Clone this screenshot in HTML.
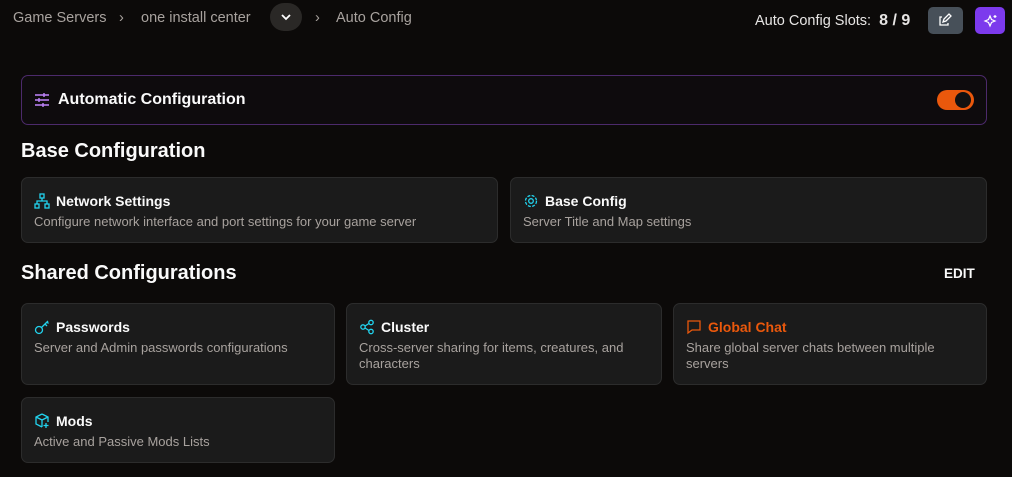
<!DOCTYPE html>
<html><head><style>
*{box-sizing:border-box;margin:0;padding:0}
body{width:1012px;height:477px;background:#0c0a09;font-family:"Liberation Sans",sans-serif;color:#fafafa;position:relative;overflow:hidden}
.a{position:absolute}
.bc{font-size:14.5px;color:#a8a29e;top:10px}
.card{position:absolute;background:#1b1b1b;border:1px solid #2c2c2c;border-radius:7px;padding:14px 12px}
.t{font-size:14px;font-weight:bold;display:flex;align-items:center;gap:6px;height:18px}
.d{font-size:13px;color:#a8a29e;margin-top:4px;line-height:16px}
h2{position:absolute;font-size:20px;font-weight:bold;left:21px}
svg{flex:none}
</style></head><body>
<div class="a bc" style="left:13px">Game Servers</div>
<div class="a bc" style="left:119px">›</div>
<div class="a bc" style="left:141px">one install center</div>
<div class="a" style="left:270px;top:3px;width:32px;height:28px;border-radius:14px;background:#2a2826"><svg width="32" height="28"><path d="M12 12l4 4 4-4" stroke="#fff" stroke-width="1.8" fill="none"/></svg></div>
<div class="a bc" style="left:315px">›</div>
<div class="a bc" style="left:336px">Auto Config</div>
<div class="a" style="left:755px;top:12px;font-size:14.5px;color:#e7e5e4">Auto Config Slots:&nbsp; <b style="font-size:16px">8 / 9</b></div>
<div class="a" style="left:928px;top:7px;width:35px;height:27px;border-radius:5px;background:#475059"><svg width="35" height="27"><path d="M14 10h-2v8h8v-2M15 15l1-3 5-5 2 2-5 5z" stroke="#fff" stroke-width="1.3" fill="none"/></svg></div>
<div class="a" style="left:975px;top:7px;width:30px;height:27px;border-radius:5px;background:#7c3aed"><svg width="30" height="27"><path d="M15 9l1.5 3.5L20 14l-3.5 1.5L15 19l-1.5-3.5L10 14l3.5-1.5z M20 8v3M18.5 9.5h3" stroke="#fff" stroke-width="1.2" fill="none"/></svg></div>

<div class="a" style="left:21px;top:75px;width:966px;height:50px;border:1px solid #4c2a6b;border-radius:7px;background:#0e0b0d"></div>
<div class="a" style="left:34px;top:92px"><svg width="16" height="16" stroke="#c084fc" stroke-width="1.4"><path d="M1 3h14M1 8h14M1 13h14M10 1v4M5 6v4M9 11v4"/></svg></div>
<div class="a" style="left:58px;top:91px;font-size:16px;font-weight:bold">Automatic Configuration</div>
<div class="a" style="left:937px;top:90px;width:37px;height:20px;border-radius:10px;background:#ea580c"><div class="a" style="left:18px;top:2px;width:16px;height:16px;border-radius:8px;background:#111"></div></div>

<h2 style="top:140px">Base Configuration</h2>
<div class="card" style="left:21px;top:177px;width:477px;height:66px"><div class="t"><svg width="16" height="16" fill="none" stroke="#22d3ee" stroke-width="1.3"><rect x="6" y="1" width="4" height="4"/><rect x="1" y="11" width="4" height="4"/><rect x="11" y="11" width="4" height="4"/><path d="M8 5v3M3 11V8h10v3"/></svg>Network Settings</div><div class="d">Configure network interface and port settings for your game server</div></div>
<div class="card" style="left:510px;top:177px;width:477px;height:66px"><div class="t"><svg width="16" height="16" fill="none" stroke="#22d3ee" stroke-width="1.3"><circle cx="8" cy="8" r="2.3"/><circle cx="8" cy="8" r="5.5" stroke-dasharray="3 1.4"/></svg>Base Config</div><div class="d">Server Title and Map settings</div></div>

<h2 style="top:262px">Shared Configurations</h2>
<div class="a" style="left:944px;top:266px;font-size:13.5px;font-weight:bold">EDIT</div>
<div class="card" style="left:21px;top:303px;width:314px;height:82px"><div class="t"><svg width="16" height="16" fill="none" stroke="#22d3ee" stroke-width="1.3"><circle cx="5" cy="11" r="3.5"/><path d="M7.5 8.5L14 2M11 5l2 2M13 3l1.5 1.5"/></svg>Passwords</div><div class="d">Server and Admin passwords configurations</div></div>
<div class="card" style="left:346px;top:303px;width:316px;height:82px;padding-right:30px"><div class="t"><svg width="16" height="16" fill="none" stroke="#22d3ee" stroke-width="1.3"><circle cx="12" cy="3.5" r="2.2"/><circle cx="4" cy="8" r="2.2"/><circle cx="12" cy="12.5" r="2.2"/><path d="M6 7l4-2.5M6 9l4 2.5"/></svg>Cluster</div><div class="d">Cross-server sharing for items, creatures, and characters</div></div>
<div class="card" style="left:673px;top:303px;width:314px;height:82px;padding-right:40px"><div class="t" style="color:#ea580c"><svg width="16" height="16" fill="none" stroke="#ea580c" stroke-width="1.3"><path d="M2 2h12v9H6l-4 3z"/></svg>Global Chat</div><div class="d">Share global server chats between multiple servers</div></div>
<div class="card" style="left:21px;top:397px;width:314px;height:66px"><div class="t"><svg width="16" height="16" fill="none" stroke="#22d3ee" stroke-width="1.3"><path d="M8 1l6 3v5M8 1L2 4v7l6 3M2 4l6 3 6-3M8 7v7"/><path d="M12 10v5M9.5 12.5h5"/></svg>Mods</div><div class="d">Active and Passive Mods Lists</div></div>
</body></html>
